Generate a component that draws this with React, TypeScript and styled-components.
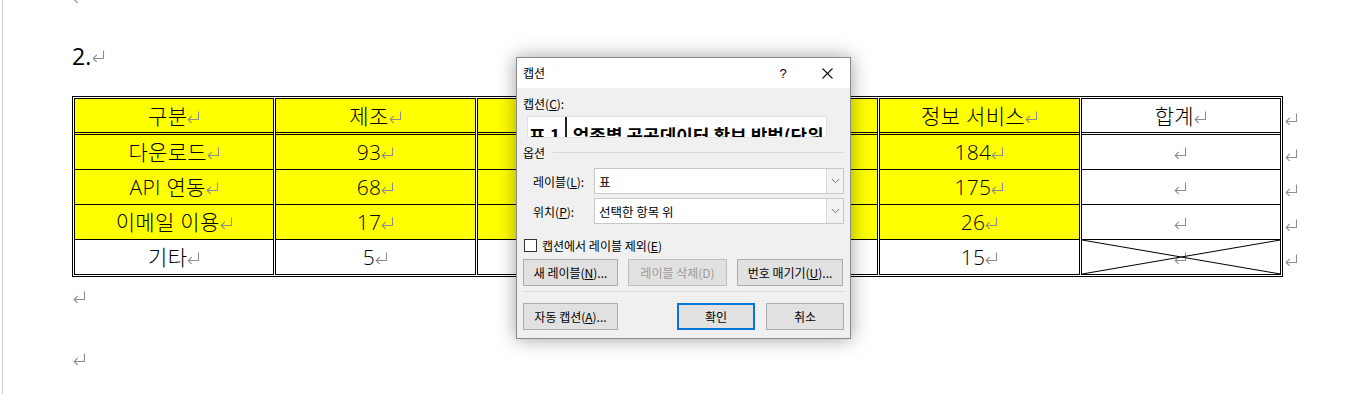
import React from "react";
import styled, { createGlobalStyle } from "styled-components";

const GlobalStyle = createGlobalStyle`
  html, body { margin: 0; padding: 0; background: #fff; }
  body {
    width: 1346px; height: 394px; overflow: hidden;
    font-family: "Open Sans", "Noto Sans CJK KR", sans-serif;
  }
  * { box-sizing: border-box; }
`;

const Root = styled.div`
  position: relative;
  width: 1346px;
  height: 394px;
  overflow: hidden;
`;

const Page = styled.div`
  margin-left: 2px;
  height: 394px;
  border-left: 1px solid #c8c8c8;
  padding-left: 69px;
  display: flex;
  flex-direction: column;
`;

const MarkSvg = styled.svg`
  display: inline-block;
  flex: none;
  width: 13px;
  height: 12px;
`;

const ReturnMark = ({ className }: { className?: string }) => (
  <MarkSvg className={className} viewBox="0 0 13 12">
    <path
      d="M11.5 0.5 V8.5 H1.2 M4.8 4.9 L1.2 8.5 L4.8 12.1"
      fill="none"
      stroke="#8e8e8e"
      strokeWidth="1.1"
    />
  </MarkSvg>
);

const TopMarkLine = styled.div`
  display: flex;
  align-items: flex-start;
  padding-left: 1px;
  margin-top: -9px;
  padding-bottom: 9px;
  height: 50px;
`;

const Heading = styled.div`
  height: 30px;
  display: flex;
  align-items: center;
  font-size: 23px;
  font-weight: 400;
  color: #000;
  gap: 1px;
`;

const TableLine = styled.div`
  margin-top: 25px;
  display: flex;
  align-items: flex-start;
`;

const TableFrame = styled.div`
  width: 1211px;
  border: 1px solid #000;
  padding: 1px;
`;

const Grid = styled.div`
  display: grid;
  grid-template-columns: repeat(6, 1fr);
  column-gap: 1px;
`;

const Cell = styled.div<{ $yellow?: boolean; $header?: boolean }>`
  position: relative;
  height: ${(p) => (p.$header ? "37px" : "35px")};
  background: ${(p) => (p.$yellow ? "#ffff00" : "#fff")};
  border-left: 1px solid #000;
  border-right: 1px solid #000;
  border-top: ${(p) => (p.$header ? "1px solid #000" : "none")};
  border-bottom: ${(p) => (p.$header ? "3px double #000" : "1px solid #000")};
  display: flex;
  align-items: center;
  justify-content: center;
  font-size: 21px;
  font-weight: 300;
  color: #000;
  line-height: 1;
  padding-top: ${(p) => (p.$header ? "2px" : "1px")};
`;

const CellText = styled.span`
  display: inline-flex;
  align-items: center;
  white-space: pre;
  letter-spacing: 0.3px;
`;

const CrossSvg = styled.svg`
  position: absolute;
  inset: 0;
  width: 100%;
  height: 100%;
`;

const SideMarks = styled.div`
  margin-left: 2px;
  padding-top: 2px;
  display: flex;
  flex-direction: column;
`;

const SideMark = styled.div<{ $header?: boolean }>`
  height: ${(p) => (p.$header ? "37px" : "35px")};
  display: flex;
  align-items: center;
  padding-top: 4px;
`;

const EmptyPara = styled.div<{ $h: number; $mt?: number }>`
  height: ${(p) => p.$h}px;
  margin-top: ${(p) => p.$mt ?? 0}px;
  display: flex;
  align-items: center;
  padding-left: 1px;
`;

/* ---------- Dialog ---------- */

const Dialog = styled.div`
  position: absolute;
  left: 516px;
  top: 57px;
  width: 335px;
  height: 282px;
  border: 1px solid #8a8a8a;
  background: #f0f0f0;
  box-shadow: 0 0 18px rgba(0, 0, 0, 0.38);
  display: flex;
  flex-direction: column;
  font-family: "Noto Sans CJK KR", sans-serif;
  font-size: 12px;
  color: #000;
`;

const TitleBar = styled.div`
  height: 30px;
  flex: none;
  background: #fff;
  display: flex;
  align-items: center;
  padding-left: 6px;
`;

const TitleText = styled.span`
  font-size: 12px;
  margin-top: -1px;
`;

const TitleButton = styled.div<{ $w: number }>`
  width: ${(p) => p.$w}px;
  height: 30px;
  display: flex;
  align-items: center;
  justify-content: center;
  font-size: 13px;
  font-family: "Liberation Sans", sans-serif;
`;

const TitleButtons = styled.div`
  margin-left: auto;
  display: flex;
  gap: 6px;
`;

const Body = styled.div`
  flex: 1;
  padding: 0 6px 8px 6px;
  display: flex;
  flex-direction: column;
`;

const Label = styled.div<{ $mt: number }>`
  margin-top: ${(p) => p.$mt}px;
  height: 16px;
  line-height: 16px;
  white-space: nowrap;
`;

const CaptionBox = styled.div`
  margin-top: 4px;
  margin-left: 4px;
  width: 300px;
  height: 22px;
  background: #fff;
  border: 1px solid #e2e2e2;
  overflow: hidden;
  display: flex;
  align-items: flex-start;
  font-weight: 700;
  font-size: 18px;
  line-height: 20px;
  white-space: nowrap;
  padding-left: 1px;
`;

const CaptionSeg = styled.span`
  padding-top: 8px;
  flex: none;
`;

const Cursor = styled.span`
  align-self: stretch;
  width: 1.5px;
  background: #222;
  margin: 0 6px 0 5px;
  flex: none;
`;

const GroupRow = styled.div`
  margin-top: 6px;
  height: 16px;
  display: flex;
  align-items: center;
`;

const GroupLine = styled.div`
  flex: 1;
  height: 1px;
  background: #dadada;
  margin-left: 8px;
`;

const FieldRow = styled.div<{ $mt: number }>`
  margin-top: ${(p) => p.$mt}px;
  height: 26px;
  display: flex;
  align-items: center;
  padding-left: 10px;
`;

const FieldLabel = styled.div`
  width: 61px;
  flex: none;
  white-space: nowrap;
`;

const Combo = styled.div`
  flex: 1;
  height: 26px;
  background: #fff;
  border: 1px solid #c8c8c8;
  display: flex;
  align-items: center;
  padding-left: 4px;
  font-size: 12.5px;
`;

const ComboText = styled.span`
  flex: 1;
  white-space: nowrap;
`;

const ComboArrow = styled.div`
  width: 17px;
  height: 24px;
  border-left: 1px solid #d8d8d8;
  background: #f3f3f3;
  display: flex;
  align-items: center;
  justify-content: center;
`;

const CheckRow = styled.div`
  margin-top: 14px;
  height: 14px;
  display: flex;
  align-items: center;
  gap: 5px;
  padding-left: 1px;
`;

const CheckBox = styled.div`
  width: 13px;
  height: 13px;
  background: #fff;
  border: 1px solid #333;
  flex: none;
`;

const ButtonRow = styled.div<{ $mt: number }>`
  margin-top: ${(p) => p.$mt}px;
  height: 27px;
  display: flex;
  align-items: stretch;
`;

const Button = styled.div<{ $w: number; $ml?: number; $disabled?: boolean; $default?: boolean }>`
  width: ${(p) => p.$w}px;
  margin-left: ${(p) => p.$ml ?? 0}px;
  flex: none;
  background: #e1e1e1;
  border: 1px solid ${(p) => (p.$default ? "#0078d7" : p.$disabled ? "#bfbfbf" : "#adadad")};
  box-shadow: ${(p) => (p.$default ? "inset 0 0 0 1px #0078d7" : "none")};
  color: ${(p) => (p.$disabled ? "#9a9a9a" : "#000")};
  display: flex;
  align-items: center;
  justify-content: center;
  white-space: nowrap;
`;

const Separator = styled.div`
  margin-top: 5px;
  height: 1px;
  background: #dadada;
`;

const Spacer = styled.div`
  flex: 1;
`;

const Chevron = () => (
  <svg width="9" height="6" viewBox="0 0 9 6">
    <path d="M0.8 1 L4.5 4.7 L8.2 1" fill="none" stroke="#707070" strokeWidth="1" />
  </svg>
);

const CloseIcon = () => (
  <svg width="11" height="11" viewBox="0 0 11 11">
    <path d="M0.5 0.5 L10.5 10.5 M10.5 0.5 L0.5 10.5" stroke="#111" strokeWidth="1.1" />
  </svg>
);

type Row = { cells: string[]; yellow: boolean[] };

const header = ["구분", "제조", "도소매", "금융 및 보험", "정보 서비스", "합계"];
const rows: Row[] = [
  { cells: ["다운로드", "93", "57", "112", "184", ""], yellow: [true, true, true, true, true, false] },
  { cells: ["API 연동", "68", "41", "96", "175", ""], yellow: [true, true, true, true, true, false] },
  { cells: ["이메일 이용", "17", "12", "21", "26", ""], yellow: [true, true, true, true, true, false] },
  { cells: ["기타", "5", "3", "8", "15", ""], yellow: [false, false, false, false, false, false] },
];

export default function App() {
  return (
    <Root>
      <GlobalStyle />
      <Page>
        <TopMarkLine>
          <ReturnMark />
        </TopMarkLine>
        <Heading>
          <span>2.</span>
          <ReturnMark />
        </Heading>
        <TableLine>
          <TableFrame>
            <Grid>
              {header.map((h, i) => (
                <Cell key={"h" + i} $header $yellow={i < 5}>
                  <CellText>
                    {h}
                    <ReturnMark />
                  </CellText>
                </Cell>
              ))}
              {rows.map((r, ri) =>
                r.cells.map((c, ci) => (
                  <Cell key={ri + "-" + ci} $yellow={r.yellow[ci]}>
                    {ri === 3 && ci === 5 && (
                      <CrossSvg viewBox="0 0 100 100" preserveAspectRatio="none">
                        <path
                          d="M0 0 L100 100 M0 100 L100 0"
                          stroke="#000"
                          strokeWidth="1"
                          vectorEffect="non-scaling-stroke"
                          fill="none"
                        />
                      </CrossSvg>
                    )}
                    <CellText>
                      {c}
                      <ReturnMark />
                    </CellText>
                  </Cell>
                ))
              )}
            </Grid>
          </TableFrame>
          <SideMarks>
            <SideMark $header>
              <ReturnMark />
            </SideMark>
            {rows.map((_, i) => (
              <SideMark key={i}>
                <ReturnMark />
              </SideMark>
            ))}
          </SideMarks>
        </TableLine>
        <EmptyPara $h={40} $mt={0}>
          <ReturnMark />
        </EmptyPara>
        <EmptyPara $h={40} $mt={22}>
          <ReturnMark />
        </EmptyPara>
      </Page>

      <Dialog>
        <TitleBar>
          <TitleText>캡션</TitleText>
          <TitleButtons>
            <TitleButton $w={30}>?</TitleButton>
            <TitleButton $w={46}>
              <CloseIcon />
            </TitleButton>
          </TitleButtons>
        </TitleBar>
        <Body>
          <Label $mt={8}>
            캡션(<u>C</u>):
          </Label>
          <CaptionBox>
            <CaptionSeg>표 1</CaptionSeg>
            <Cursor />
            <CaptionSeg>업종별 공공데이터 확보 방법(단위</CaptionSeg>
          </CaptionBox>
          <GroupRow>
            <span>옵션</span>
            <GroupLine />
          </GroupRow>
          <FieldRow $mt={8}>
            <FieldLabel>
              레이블(<u>L</u>):
            </FieldLabel>
            <Combo>
              <ComboText>표</ComboText>
              <ComboArrow>
                <Chevron />
              </ComboArrow>
            </Combo>
          </FieldRow>
          <FieldRow $mt={4}>
            <FieldLabel>
              위치(<u>P</u>):
            </FieldLabel>
            <Combo>
              <ComboText>선택한 항목 위</ComboText>
              <ComboArrow>
                <Chevron />
              </ComboArrow>
            </Combo>
          </FieldRow>
          <CheckRow>
            <CheckBox />
            <span>
              캡션에서 레이블 제외(<u>E</u>)
            </span>
          </CheckRow>
          <ButtonRow $mt={7}>
            <Button $w={95}>
              새 레이블(<u>N</u>)...
            </Button>
            <Button $w={99} $ml={10} $disabled>
              레이블 삭제(D)
            </Button>
            <Button $w={106} $ml={10}>
              번호 매기기(<u>U</u>)...
            </Button>
          </ButtonRow>
          <Separator />
          <ButtonRow $mt={11}>
            <Button $w={95}>
              자동 캡션(<u>A</u>)...
            </Button>
            <Spacer />
            <Button $w={78} $default>
              확인
            </Button>
            <Button $w={78} $ml={11}>
              취소
            </Button>
          </ButtonRow>
        </Body>
      </Dialog>
    </Root>
  );
}
